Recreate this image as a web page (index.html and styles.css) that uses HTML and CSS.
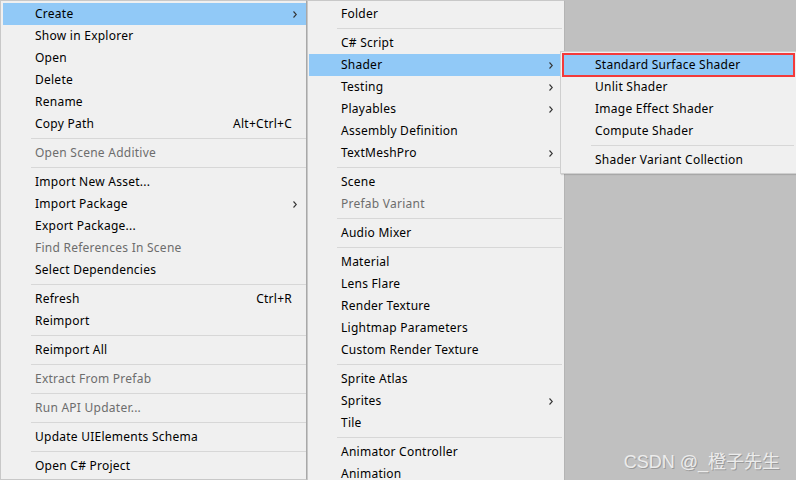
FILE: index.html
```html
<!DOCTYPE html>
<html>
<head>
<meta charset="utf-8">
<link rel="stylesheet" href="styles.css">
</head>
<body>
<div class="desk">
  <div class="menu menu-main">
    <div class="item active"><span class="label">Create</span><svg class="arrow" viewBox="0 0 4 7" width="4" height="7"><path d="M0.5 0.5 L3.3 3.5 L0.5 6.5" fill="none" stroke="#333" stroke-width="1.1"/></svg></div>
    <div class="item"><span class="label">Show in Explorer</span></div>
    <div class="item"><span class="label">Open</span></div>
    <div class="item"><span class="label">Delete</span></div>
    <div class="item"><span class="label">Rename</span></div>
    <div class="item"><span class="label">Copy Path</span><span class="shortcut">Alt+Ctrl+C</span></div>
    <div class="sep"></div>
    <div class="item disabled"><span class="label">Open Scene Additive</span></div>
    <div class="sep"></div>
    <div class="item"><span class="label">Import New Asset...</span></div>
    <div class="item"><span class="label">Import Package</span><svg class="arrow" viewBox="0 0 4 7" width="4" height="7"><path d="M0.5 0.5 L3.3 3.5 L0.5 6.5" fill="none" stroke="#333" stroke-width="1.1"/></svg></div>
    <div class="item"><span class="label">Export Package...</span></div>
    <div class="item disabled"><span class="label">Find References In Scene</span></div>
    <div class="item"><span class="label">Select Dependencies</span></div>
    <div class="sep"></div>
    <div class="item"><span class="label">Refresh</span><span class="shortcut">Ctrl+R</span></div>
    <div class="item"><span class="label">Reimport</span></div>
    <div class="sep"></div>
    <div class="item"><span class="label">Reimport All</span></div>
    <div class="sep"></div>
    <div class="item disabled"><span class="label">Extract From Prefab</span></div>
    <div class="sep"></div>
    <div class="item disabled"><span class="label">Run API Updater...</span></div>
    <div class="sep"></div>
    <div class="item"><span class="label">Update UIElements Schema</span></div>
    <div class="sep"></div>
    <div class="item"><span class="label">Open C# Project</span></div>
  </div>
  <div class="menu menu-create">
    <div class="item"><span class="label">Folder</span></div>
    <div class="sep"></div>
    <div class="item"><span class="label">C# Script</span></div>
    <div class="item active"><span class="label">Shader</span><svg class="arrow" viewBox="0 0 4 7" width="4" height="7"><path d="M0.5 0.5 L3.3 3.5 L0.5 6.5" fill="none" stroke="#333" stroke-width="1.1"/></svg></div>
    <div class="item"><span class="label">Testing</span><svg class="arrow" viewBox="0 0 4 7" width="4" height="7"><path d="M0.5 0.5 L3.3 3.5 L0.5 6.5" fill="none" stroke="#333" stroke-width="1.1"/></svg></div>
    <div class="item"><span class="label">Playables</span><svg class="arrow" viewBox="0 0 4 7" width="4" height="7"><path d="M0.5 0.5 L3.3 3.5 L0.5 6.5" fill="none" stroke="#333" stroke-width="1.1"/></svg></div>
    <div class="item"><span class="label">Assembly Definition</span></div>
    <div class="item"><span class="label">TextMeshPro</span><svg class="arrow" viewBox="0 0 4 7" width="4" height="7"><path d="M0.5 0.5 L3.3 3.5 L0.5 6.5" fill="none" stroke="#333" stroke-width="1.1"/></svg></div>
    <div class="sep"></div>
    <div class="item"><span class="label">Scene</span></div>
    <div class="item disabled"><span class="label">Prefab Variant</span></div>
    <div class="sep"></div>
    <div class="item"><span class="label">Audio Mixer</span></div>
    <div class="sep"></div>
    <div class="item"><span class="label">Material</span></div>
    <div class="item"><span class="label">Lens Flare</span></div>
    <div class="item"><span class="label">Render Texture</span></div>
    <div class="item"><span class="label">Lightmap Parameters</span></div>
    <div class="item"><span class="label">Custom Render Texture</span></div>
    <div class="sep"></div>
    <div class="item"><span class="label">Sprite Atlas</span></div>
    <div class="item"><span class="label">Sprites</span><svg class="arrow" viewBox="0 0 4 7" width="4" height="7"><path d="M0.5 0.5 L3.3 3.5 L0.5 6.5" fill="none" stroke="#333" stroke-width="1.1"/></svg></div>
    <div class="item"><span class="label">Tile</span></div>
    <div class="sep"></div>
    <div class="item"><span class="label">Animator Controller</span></div>
    <div class="item"><span class="label">Animation</span></div>
  </div>
  <div class="menu menu-shader">
    <div class="item active marked"><span class="label">Standard Surface Shader</span></div>
    <div class="item"><span class="label">Unlit Shader</span></div>
    <div class="item"><span class="label">Image Effect Shader</span></div>
    <div class="item"><span class="label">Compute Shader</span></div>
    <div class="sep"></div>
    <div class="item"><span class="label">Shader Variant Collection</span></div>
  </div>
</div>
<div class="watermark">CSDN @_橙子先生</div>
</body>
</html>
```
FILE: styles.css
```css
html, body {
  margin: 0;
  padding: 0;
}
body {
  width: 796px;
  height: 480px;
  overflow: hidden;
  background: #c0c0c0;
  position: relative;
  font-family: "Noto Sans", "Open Sans", sans-serif;
  font-size: 12px;
  letter-spacing: 0.25px;
  color: #000;
}
.desk {
  display: flex;
  align-items: flex-start;
}
.menu {
  background: #f0f0f0;
  border: 1px solid #c8c8c8;
  padding: 2px;
  box-sizing: border-box;
  flex: none;
}
.menu-main {
  width: 307px;
  padding-right: 0;
  border-right-color: #a8a8a8;
}
.menu-create {
  width: 258px;
  padding-left: 1px;
  border-right-color: #b4b4b4;
}
.menu-shader {
  width: 237px;
  margin-left: -5px;
  margin-top: 51px;
  border-color: #cfcfcf;
  box-shadow: 1px 1px 1px rgba(0,0,0,0.12);
}
.item {
  height: 22px;
  box-sizing: border-box;
  padding-bottom: 2px;
  display: flex;
  align-items: center;
  padding-left: 32px;
  padding-right: 9px;
  white-space: nowrap;
}
.item .arrow {
  margin-top: 2px;
}
.item.active {
  background: #91c9f7;
}
.item.marked {
  outline: 2px solid #f43a3a;
  outline-offset: -1px;
}
.item.disabled {
  color: #6d6d6d;
}
.label {
  flex: 1;
}
.shortcut {
  padding-right: 5px;
}
.arrow {
  flex: none;
  display: block;
}
.sep {
  height: 1px;
  background: #d7d7d7;
  margin: 3px 0 3px 28px;
}
.watermark {
  position: absolute;
  right: 16px;
  bottom: 7px;
  font-family: "Liberation Sans", "Noto Sans CJK SC", sans-serif;
  font-size: 18px;
  letter-spacing: 0;
  color: #ececec;
  text-shadow: 1px 1px 0 #9a9a9a;
}
```
